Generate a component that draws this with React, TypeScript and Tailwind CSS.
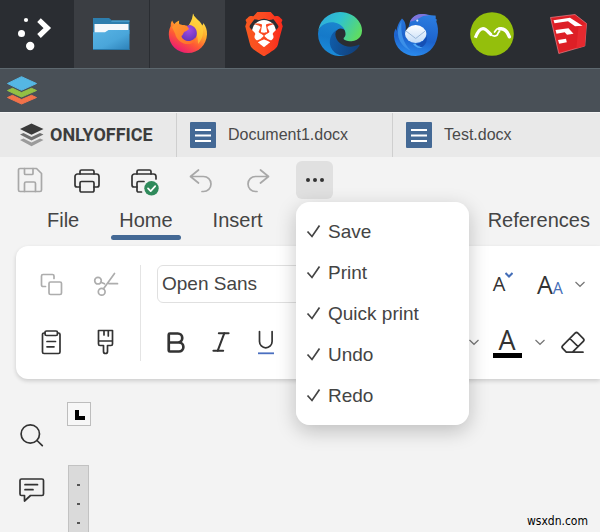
import type { ReactNode } from "react";
import { Bold, Italic } from "lucide-react";
import { SiBrave } from "react-icons/si";

type IconProps = { children: ReactNode; className?: string; size?: number };

function LineIcon({ children, className = "text-[#333]", size = 26 }: IconProps) {
  return (
    <svg
      width={size}
      height={size}
      viewBox={`0 0 ${size} ${size}`}
      fill="none"
      stroke="currentColor"
      strokeWidth="1.7"
      strokeLinecap="round"
      strokeLinejoin="round"
      aria-hidden="true"
      className={`shrink-0 overflow-visible ${className}`}
    >
      {children}
    </svg>
  );
}

function Chevron({ className = "text-[#777]" }: { className?: string }) {
  return (
    <svg width="12" height="12" viewBox="0 0 12 12" fill="none" stroke="currentColor" strokeWidth="1.2" className={className} aria-hidden="true">
      <path d="M1.500 4L6 8.300 10.500 4" />
    </svg>
  );
}

function IconButton({ label, children, className = "w-9" }: { label: string; children: ReactNode; className?: string }) {
  return (
    <button type="button" aria-label={label} className={`flex h-[38px] shrink-0 items-center justify-center ${className}`}>
      {children}
    </button>
  );
}

/* ---------- Desktop panel ---------- */

function TaskIcon({ x, children }: { x: number; children: ReactNode }) {
  return (
    <svg width="45" height="44" viewBox={`${x} 12 45 44`} aria-hidden="true" className="overflow-visible">
      {children}
    </svg>
  );
}

function Launcher() {
  return (
    <TaskIcon x={14}>
      <g fill="#fff">
        <circle cx="26" cy="20" r="2.1" />
        <circle cx="21.5" cy="33.5" r="3.5" />
        <circle cx="30.2" cy="46" r="4.2" />
      </g>
      <path d="M39 20.2l8.3 7.9-8.3 7.9" fill="none" stroke="#fff" strokeWidth="5.2" />
    </TaskIcon>
  );
}

function Files() {
  return (
    <TaskIcon x={88}>
      <defs>
        <linearGradient id="folder" x1="0" y1="0" x2="1" y2="1">
          <stop offset="0" stopColor="#58b3e4" />
          <stop offset=".55" stopColor="#4aa6da" />
          <stop offset="1" stopColor="#2c80b8" />
        </linearGradient>
      </defs>
      <path d="M92 18h16l3 2.5h17.5V34H92z" fill="#2d7eae" />
      <path d="M111 20.5h17.5v1.3H110z" fill="#4ba3d2" />
      <path d="M93.5 24h34v10h-34z" fill="#f4f8fb" />
      <path d="M92 32.3h12l3.5-2.3h21v20H92z" fill="url(#folder)" />
      <path d="M92 49h36.5v1H92z" fill="#2877a8" />
    </TaskIcon>
  );
}

function Firefox() {
  return (
    <TaskIcon x={164}>
      <defs>
        <linearGradient id="ffBody" x1=".8" y1=".1" x2=".3" y2="1">
          <stop offset="0" stopColor="#ffe14a" />
          <stop offset=".35" stopColor="#ffab2c" />
          <stop offset=".65" stopColor="#ff5b33" />
          <stop offset="1" stopColor="#ea1777" />
        </linearGradient>
        <radialGradient id="ffGlobe" cx=".5" cy=".3" r=".8">
          <stop offset="0" stopColor="#a34be2" />
          <stop offset="1" stopColor="#5a32b4" />
        </radialGradient>
        <linearGradient id="ffFox" x1="0" y1="0" x2="1" y2="1">
          <stop offset="0" stopColor="#ff9a2e" />
          <stop offset="1" stopColor="#ff6a2a" />
        </linearGradient>
      </defs>
      <path
        d="M192 13.400C193 17 196 18.700 198.500 21.500C199.800 23 200.700 24.300 201.200 25.500C202 24.800 202.400 24 202.400 23C205 26.500 206.200 30 206 34.500C205.500 45 197.400 53 187.100 53C176.400 53 167.900 45 167.800 34.500C167.800 31 168.600 28.300 169.700 26.100C169.600 23.900 170 22 171.200 20.500C171.700 22 172.400 22.900 173.500 23.900C174.800 22.400 176.200 21.300 178.200 20.500C177.600 22.500 178.300 24.500 179.200 25.700C182.200 25.100 184 25 186.200 27.500C188.800 24 191.900 18.900 192 13.400z"
        fill="url(#ffBody)"
      />
      <path d="M192 13.400C193 17 196 18.700 198.500 21.500C204 28 203 38 197 44C197 36 195.500 29 187.500 25.500C190 22 191.500 18.500 192 13.400z" fill="#ffd43a" opacity=".6" />
      <path d="M184 27.500C186 25 189 24.200 191.500 26C196.500 28.500 196.800 34.500 194.500 38C191.500 42.300 184.500 42.500 181 38.500C178.500 35 179.500 30 184 27.500z" fill="url(#ffGlobe)" />
      <path d="M171 27c2.500-3 6-3.700 9-2.500 2 .8 3.400 1 5.600.9l2.400 3.300c-1 1.700-2.700 2-4.500 3.100-1.500 1-1 3-3 4.200 0 3 5 5.700 8.400 5 3-.5 4.300-2.600 6-3.500-1.200 5-4.500 6.800-8.100 6.600-6.200-.2-11.500-4.500-12.600-10.400z" fill="url(#ffFox)" />
    </TaskIcon>
  );
}

function Brave() {
  return (
    <span className="relative flex items-center justify-center">
      <span className="absolute h-7 w-6 rounded-full bg-white" />
      <svg width="0" height="0" className="absolute" aria-hidden="true">
        <defs>
          <linearGradient id="brave" x1="0" y1="0" x2="1" y2="0">
            <stop offset="0" stopColor="#f8591f" />
            <stop offset=".5" stopColor="#fb4a22" />
            <stop offset="1" stopColor="#fa2a1c" />
          </linearGradient>
        </defs>
      </svg>
      <SiBrave size={44} fill="url(#brave)" className="relative" aria-hidden="true" />
    </span>
  );
}

function Edge() {
  return (
    <svg width="44" height="44" viewBox="0 0 256 256" aria-hidden="true">
      <defs>
        <linearGradient id="edDark" x1="0" y1="0" x2="1" y2=".2">
          <stop offset="0" stopColor="#0f5fae" />
          <stop offset="1" stopColor="#12417c" />
        </linearGradient>
        <linearGradient id="edBlue" x1=".6" y1="0" x2=".4" y2="1">
          <stop offset="0" stopColor="#1b86cf" />
          <stop offset=".5" stopColor="#1579c9" />
          <stop offset="1" stopColor="#1a8ddb" />
        </linearGradient>
        <linearGradient id="edGreen" x1="0" y1=".2" x2="1" y2=".6">
          <stop offset="0" stopColor="#2fa9dd" />
          <stop offset=".45" stopColor="#2fc3cf" />
          <stop offset="1" stopColor="#5fdc62" />
        </linearGradient>
      </defs>
      <path fill="url(#edDark)" d="M235.680 190.480a92.840 92.840 0 0 1-10.540 4.710 101.930 101.930 0 0 1-35.900 6.460c-47.320 0-88.540-32.550-88.540-74.320A31.480 31.480 0 0 1 117.130 100c-42.800 1.800-53.800 46.400-53.800 72.530 0 73.880 68.090 81.370 82.760 81.370 7.910 0 19.840-2.300 27-4.560l1.310-.44a128.340 128.340 0 0 0 66.600-52.800 4 4 0 0 0-5.320-5.620z" />
      <path fill="url(#edBlue)" d="M105.730 241.420A79.200 79.200 0 0 1 83 220.080a80.720 80.720 0 0 1 34.120-120c3.120-1.470 8.450-4.130 15.540-4a32.350 32.350 0 0 1 25.690 13 31.880 31.880 0 0 1 6.360 18.660c0-.21 24.460-79.600-80-79.600-43.900 0-84.700 41.660-84.700 78.210a130.150 130.150 0 0 0 12.110 56 128 128 0 0 0 156.380 67.110 75.550 75.550 0 0 1-62.780-8z" />
      <path fill="url(#edGreen)" d="M152.330 148.860c-.81 1.050-3.300 2.500-3.300 5.660 0 2.610 1.700 5.120 4.720 7.230 14.380 10 41.490 8.680 41.560 8.680A59.560 59.560 0 0 0 225.590 162a61.380 61.380 0 0 0 30.430-52.880c.26-22.410-8-37.310-11.340-43.910C223.460 23.840 177.720.01 127.990.01a128 128 0 0 0-128 126.200c.48-36.540 36.800-66.050 80-66.050 3.500 0 23.460.34 42 10.070 16.340 8.580 24.900 18.940 30.850 29.210 6.180 10.670 7.280 24.150 7.280 29.520s-2.740 13.330-7.810 19.910z" />
    </svg>
  );
}

function Thunderbird() {
  return (
    <TaskIcon x={392}>
      <defs>
        <linearGradient id="tbBody" x1=".6" y1="0" x2=".4" y2="1">
          <stop offset="0" stopColor="#2c7de0" />
          <stop offset=".6" stopColor="#1c62cc" />
          <stop offset="1" stopColor="#2b8cee" />
        </linearGradient>
        <linearGradient id="tbMail" x1="0" y1="0" x2="0" y2="1">
          <stop offset="0" stopColor="#fff" />
          <stop offset="1" stopColor="#c3dcf6" />
        </linearGradient>
      </defs>
      <path
        d="M401 18.500C404.500 21.500 405.500 26 404.500 32L407 29L409 21.500C411.500 16.500 416 14 421 14C426 14 430 16 434.500 15.500C434.800 17 435 18 434.500 18.800C435.800 19 436 20 435.300 21.500C437 26 437.500 31 436.500 36C434.500 48 426 55.800 414.500 56C402.500 56 394 48 393 36.500C392.800 33.500 393.300 31 394.700 28.500L395.500 31C396 26 398 22 401 18.500z"
        fill="url(#tbBody)"
      />
      <path d="M409 21.800C411 17 415.500 14 421 14C424 14 426.500 14.700 428.500 15.500C424 15.300 421 16 418.500 18C415.500 19.500 413 21 409 21.800z" fill="#7f74dc" />
      <path d="M400.500 21c-3.500 5.500-4.500 11-3 16.500 2 6.500 7 11 12 13-7.500-8-10-17-9-29.500z" fill="#3b8fe8" />
      <ellipse cx="414.700" cy="34" rx="10.700" ry="9" fill="url(#tbMail)" />
      <path d="M405 31l9.700 7.500 9.500-7.500" fill="none" stroke="#9ab8da" strokeWidth="1" />
      <path d="M414 44c6-.5 10-3.500 11.500-8 1.500 6-2 11.500-8 11.800 1.500-.6 2-1.500 2-2.300-2 .3-4-.2-5.500-1.500z" fill="#154fb4" />
      <path d="M412 44c2 3 5.500 5 9.500 3.500-3-.3-5.500-1.500-7-4z" fill="#4fa8f5" />
      <circle cx="416.300" cy="20.600" r="1.100" fill="#e6f0fc" />
    </TaskIcon>
  );
}

function WaveApp() {
  return (
    <TaskIcon x={468}>
      <circle cx="491" cy="34" r="21.800" fill="#94bf0c" />
      <path d="M474.300 37.800C476.500 32 479 28.600 482 28.600C485.500 28.600 488 33.500 490.500 35" fill="none" stroke="#fff" strokeWidth="3.200" />
      <path d="M489 33.200C491 36 493.500 36.800 495.500 35.600C497.500 34.500 496.500 32 498.500 31.600M493.500 32C495 29.500 497 28 499.500 28.200" fill="none" stroke="#fff" strokeWidth="1.700" strokeLinecap="round" />
      <path d="M498.500 29C503.500 27.800 506.500 32 508.400 36.800" fill="none" stroke="#fff" strokeWidth="3.400" strokeLinecap="round" />
    </TaskIcon>
  );
}

function SketchApp() {
  return (
    <TaskIcon x={544}>
      <path d="M549.500 17.500L574 14.500l11.500 9-1.700 22.500-26 7.500z" fill="#dd1f26" stroke="#e9828a" strokeWidth=".7" />
      <path d="M577.500 26.500l8-3-1.700 22.500-8.500 2.500z" fill="#e6292f" />
      <path d="M552.500 20.200l16.500-2.500 12.500 8-7.500.6-7-5-13.500 2z" fill="#fff" />
      <path d="M554.500 30l13-1.800 5 5.500-6.500 1.100-2.300-2.500-8.200 1.400z" fill="#fff" />
      <path d="M557 40l8-1.300.8 3.500-7.600 1.500z" fill="#fff" />
    </TaskIcon>
  );
}

const tasks = [
  { name: "Files", icon: <Files />, open: true },
  { name: "Firefox", icon: <Firefox />, open: true },
  { name: "Brave", icon: <Brave />, open: false },
  { name: "Edge", icon: <Edge />, open: false },
  { name: "Thunderbird", icon: <Thunderbird />, open: false },
  { name: "Wave", icon: <WaveApp />, open: false },
  { name: "SketchUp", icon: <SketchApp />, open: false },
];

function Taskbar() {
  return (
    <nav aria-label="Taskbar" className="flex h-[68px] gap-px overflow-hidden bg-[#2a2d32]">
      <button type="button" aria-label="Application launcher" className="flex w-[73px] shrink-0 items-center justify-center">
        <Launcher />
      </button>
      {tasks.map((t) => (
        <button
          key={t.name}
          type="button"
          aria-label={t.name}
          className={`flex w-[75px] shrink-0 items-center justify-center ${t.open ? "bg-[#3b3e43]" : ""}`}
        >
          {t.icon}
        </button>
      ))}
    </nav>
  );
}

/* ---------- Window title and document tabs ---------- */

function TitleBar() {
  return (
    <header className="flex h-11 items-center border-t border-[#5d686f] bg-[#495057] pl-[6px]">
      <svg width="32" height="30" viewBox="6 76 32 30" aria-hidden="true">
        <path d="M7.500 97.500l14 6.500 15-6.500-5-2.200-10 4.300-9-4.300z" fill="#f2724a" stroke="#f2724a" strokeLinejoin="round" />
        <path d="M7.500 90.500l14 6.500 15-6.500-5-2.200-10 4.300-9-4.300z" fill="#93c044" stroke="#93c044" strokeLinejoin="round" />
        <path d="M7.500 83.500L21.500 76.700l15 6.800-15 6.800z" fill="#55b7e4" stroke="#55b7e4" strokeLinejoin="round" />
      </svg>
    </header>
  );
}

function DocumentTab({ title, className = "" }: { title: string; className?: string }) {
  return (
    <button type="button" role="tab" className={`flex h-full items-center border-l border-[#cfcfcf] pl-[13px] text-left text-base text-[#4a4a4a] ${className}`}>
      <svg width="26" height="26" viewBox="0 0 26 26" aria-hidden="true" className="mr-3 shrink-0">
        <rect width="26" height="26" rx="1" fill="#446995" />
        <path d="M5 8h16M5 13.500h16M5 19h16" stroke="#fff" strokeWidth="2" />
      </svg>
      {title}
    </button>
  );
}

function DocumentTabs() {
  return (
    <div role="tablist" aria-label="Documents" className="flex h-[45px] items-center border-t border-[#f5f5f5] bg-[#e9e9e9]">
      <button type="button" className="flex h-full w-44 shrink-0 items-center gap-[6px] pl-5 font-[Roboto,sans-serif] text-lg font-bold text-[#3d3d3d]">
        <svg width="24" height="24" viewBox="0 0 24 24" aria-hidden="true" className="shrink-0">
          <path d="M0 17l11.500 6.300L23.500 17l-3.500-1.600-8.500 4.200L3.500 15.400z" fill="#9b9b9b" />
          <path d="M0 11.500l11.500 6 12-6-3.500-1.600-8.500 4-8-4z" fill="#6f6f6f" />
          <path d="M0 6L11.500.5 23.500 6l-12 5.700z" fill="#3a3a3a" />
        </svg>
        ONLYOFFICE
      </button>
      <DocumentTab title="Document1.docx" className="w-[216px] shrink-0" />
      <DocumentTab title="Test.docx" className="flex-1" />
    </div>
  );
}

/* ---------- Quick access ---------- */

const quickActions = ["Save", "Print", "Quick print", "Undo", "Redo"];

function PrinterShape({ clipped = false }: { clipped?: boolean }) {
  return (
    <>
      <path d="M6 7V4.500a1.500 1.500 0 0 1 1.500-1.500h11A1.500 1.500 0 0 1 20 4.500V7" />
      <path d={clipped ? "M6 20H3a2 2 0 0 1-2-2V9.500a2.500 2.500 0 0 1 2.500-2.500h19A2.500 2.500 0 0 1 25 9.500V12" : "M6 20H3a2 2 0 0 1-2-2V9.500a2.500 2.500 0 0 1 2.500-2.500h19A2.500 2.500 0 0 1 25 9.500V18a2 2 0 0 1-2 2h-3"} />
      <path d={clipped ? "M10.500 25H7.500A1.500 1.500 0 0 1 6 23.500V16a1.500 1.500 0 0 1 1.500-1.500H13" : "M7.500 14.500h11A1.500 1.500 0 0 1 20 16v7.500a1.500 1.500 0 0 1-1.500 1.500h-11A1.500 1.500 0 0 1 6 23.500V16a1.500 1.500 0 0 1 1.500-1.500z"} />
    </>
  );
}

function QuickMenu() {
  return (
    <fieldset
      aria-label="Customize quick access"
      className="absolute left-0 top-[41px] z-10 w-[173px] rounded-[14px] bg-white py-[9px] shadow-[0_6px_20px_rgba(0,0,0,0.22)]"
    >
      {quickActions.map((action) => (
        <label key={action} className="flex h-[41px] items-center gap-[6px] pl-[10px] text-[19px] leading-6 text-[#444]">
          <input type="checkbox" defaultChecked className="peer sr-only" />
          <svg width="16" height="16" viewBox="0 0 16 16" fill="none" stroke="#444" strokeWidth="1.700" aria-hidden="true" className="shrink-0 opacity-0 peer-checked:opacity-100">
            <path d="M1.500 7.500L6 12.500 13.500 1.500" />
          </svg>
          {action}
        </label>
      ))}
    </fieldset>
  );
}

function QuickAccess() {
  return (
    <div className="flex gap-5 py-1 pl-[11px]">
      <IconButton label="Save" className="w-[37px]">
        <LineIcon className="text-[#a8a8a8]">
          <path d="M3 1.500h16.500l5 5V23a1.500 1.500 0 0 1-1.500 1.500H3A1.500 1.500 0 0 1 1.500 23V3A1.500 1.500 0 0 1 3 1.500z" />
          <path d="M7.500 1.500v5a1 1 0 0 0 1 1h6.500a1 1 0 0 0 1-1v-5M7.500 24.500V16.500A1.500 1.500 0 0 1 9 15h8a1.500 1.500 0 0 1 1.500 1.500v8" />
        </LineIcon>
      </IconButton>
      <IconButton label="Print" className="w-[37px]">
        <LineIcon>
          <PrinterShape />
        </LineIcon>
      </IconButton>
      <IconButton label="Quick print" className="w-[37px]">
        <LineIcon>
          <PrinterShape clipped />
          <circle cx="20.500" cy="21.300" r="7.200" fill="#2f8a5b" stroke="none" />
          <path d="M17 21.300l2.700 2.800 4.500-5" stroke="#fff" />
        </LineIcon>
      </IconButton>
      <IconButton label="Undo" className="w-[37px]">
        <LineIcon className="text-[#a8a8a8]">
          <path d="M10.500 3L2.500 9.500l8 6.500M2.500 9.500H15.500a7.500 7.500 0 0 1 0 15H14" />
        </LineIcon>
      </IconButton>
      <IconButton label="Redo" className="w-[37px]">
        <LineIcon className="text-[#a8a8a8]">
          <path d="M15.500 3l8 6.500-8 6.500M23.500 9.500H10.500a7.500 7.500 0 0 0 0 15H12" />
        </LineIcon>
      </IconButton>
      <div className="relative">
        <IconButton label="Customize quick access toolbar" className="w-[37px] rounded-md bg-[#e0e0e0]">
          <svg width="20" height="6" viewBox="0 0 20 6" fill="#333" aria-hidden="true">
            <circle cx="3" cy="3" r="2" />
            <circle cx="10" cy="3" r="2" />
            <circle cx="17" cy="3" r="2" />
          </svg>
        </IconButton>
        <QuickMenu />
      </div>
    </div>
  );
}

/* ---------- Ribbon ---------- */

function RibbonTab({ title, active = false, className = "" }: { title: string; active?: boolean; className?: string }) {
  return (
    <button type="button" role="tab" aria-selected={active} className={`shrink-0 pt-[3px] text-xl leading-7 text-[#444] ${className}`}>
      <span className="block px-2">{title}</span>
      <span className={`mt-px block h-[5px] rounded-full ${active ? "bg-[#446995]" : ""}`} />
    </button>
  );
}

function RibbonTabs() {
  return (
    <div role="tablist" aria-label="Ribbon" className="flex gap-6 overflow-hidden pb-[6px] pl-[39px]">
      <RibbonTab title="File" />
      <RibbonTab title="Home" active />
      <RibbonTab title="Insert" />
      <RibbonTab title="References" className="ml-[185px]" />
    </div>
  );
}

function Ribbon() {
  return (
    <section aria-label="Home" className="ml-4 flex overflow-hidden rounded-l-xl bg-white pb-[18px] pl-[15px] pt-[19px] shadow-[0_2px_4px_rgba(0,0,0,0.16)]">
      <div className="grid shrink-0 grid-cols-2 gap-x-[14px] gap-y-5">
        <IconButton label="Copy" className="w-10">
          <LineIcon className="text-[#adadad]">
            <rect x="11" y="11" width="12.500" height="12.500" rx="1.500" />
            <path d="M7.500 15.500H5A1.500 1.500 0 0 1 3.500 14V5A1.500 1.500 0 0 1 5 3.500h9.500A1.500 1.500 0 0 1 16 5v2.500" />
          </LineIcon>
        </IconButton>
        <IconButton label="Cut" className="w-10">
          <LineIcon className="text-[#adadad]">
            <circle cx="6" cy="9.700" r="3.300" />
            <circle cx="9.700" cy="20.700" r="3.400" />
            <path d="M11.500 17.700L22.500 2.500M9 11.200l3.500 1.600M17 12.700h8.500" />
          </LineIcon>
        </IconButton>
        <IconButton label="Paste" className="w-10">
          <LineIcon>
            <path d="M7 4H6a1.500 1.500 0 0 0-1.500 1.500V23A1.500 1.500 0 0 0 6 24.500h14.500A1.500 1.500 0 0 0 22 23V5.500A1.500 1.500 0 0 0 20.500 4h-1" />
            <rect x="7" y="2" width="12.500" height="4.500" rx="1.500" />
            <path d="M9 12.500h8.500M9 17.800h7" />
          </LineIcon>
        </IconButton>
        <IconButton label="Copy style" className="w-10">
          <LineIcon>
            <path d="M6.500 1.500h14V15a1.500 1.500 0 0 1-1.500 1.500h-3.500V22.500a2 2 0 0 1-4 0V16.500H8A1.500 1.500 0 0 1 6.500 15zM6.500 12h14M12 1.500V6M16.300 1.500V7" />
          </LineIcon>
        </IconButton>
      </div>

      <div className="ml-[15px] mr-4 w-px shrink-0 bg-[#e4e4e4]" />

      <div className="flex min-w-0 flex-1 flex-col gap-5">
        <div className="flex items-center">
          <input
            type="text"
            aria-label="Font"
            defaultValue="Open Sans"
            className="h-[38px] w-[304px] shrink-0 rounded-md border border-[#e0e0e0] px-1 text-[19px] text-[#444] outline-none"
          />
          <IconButton label="Decrease font size" className="ml-6 w-9">
            <span className="font-['Open_Sans',sans-serif] text-xl leading-6 text-[#333]">A</span>
            <span className="flex h-6 items-start">
              <svg width="8" height="8" viewBox="0 0 8 8" fill="none" stroke="#446eb8" strokeWidth="2" aria-hidden="true">
                <path d="M.5 1L4 4.500l3.500-3.500" />
              </svg>
            </span>
          </IconButton>
          <IconButton label="Change case" className="ml-4 gap-[11px]">
            <span className="flex items-baseline font-['Open_Sans',sans-serif] text-[#333]">
              <span className="text-[25px] leading-8">A</span>
              <span className="text-base leading-6 text-[#446eb8]">A</span>
            </span>
            <Chevron />
          </IconButton>
        </div>
        <div className="flex items-center gap-[9px]">
          <IconButton label="Bold" className="w-[37px]">
            <Bold size={27} strokeWidth={2.400} className="text-[#333]" aria-hidden="true" />
          </IconButton>
          <IconButton label="Italic">
            <Italic size={26} strokeWidth={1.900} className="text-[#333]" aria-hidden="true" />
          </IconButton>
          <IconButton label="Underline">
            <LineIcon>
              <path d="M6.500 2.500v10a6.300 6.300 0 0 0 12.600 0v-10" />
              <path d="M5 24.300h16" stroke="#4a6fc0" strokeLinecap="butt" strokeWidth="1.800" />
            </LineIcon>
          </IconButton>
          <IconButton label="Highlight color" className="w-[187px]">
            <span className="flex w-full justify-end">
              <Chevron />
            </span>
          </IconButton>
          <IconButton label="Font color">
            <span className="flex w-[29px] flex-col items-center border-b-[5px] border-black font-['Open_Sans',sans-serif] text-[27px] leading-[26px] text-[#333]">A</span>
          </IconButton>
          <IconButton label="Font color options" className="w-3">
            <Chevron />
          </IconButton>
          <IconButton label="Clear style">
            <LineIcon>
              <path d="M6.300 23.200L2.700 19.400a2 2 0 0 1 0-2.800L15.100 4.200a2 2 0 0 1 2.800 0l5.400 5.400a2 2 0 0 1 0 2.800L12.500 23.200zM12.500 23.200h10.500M9.800 9.500l8.300 8.200" />
            </LineIcon>
          </IconButton>
        </div>
      </div>
    </section>
  );
}

/* ---------- Workspace ---------- */

function Workspace() {
  return (
    <main className="flex flex-1">
      <nav aria-label="Side panel" className="flex w-16 shrink-0 flex-col items-center gap-[17px] pt-[37px]">
        <IconButton label="Find">
          <LineIcon>
            <circle cx="11.300" cy="12" r="9.200" />
            <path d="M18 18.500l5.300 5.200" />
          </LineIcon>
        </IconButton>
        <IconButton label="Comments">
          <LineIcon>
            <path d="M2.500 2h20.500a1.500 1.500 0 0 1 1.500 1.500V17a1.500 1.500 0 0 1-1.500 1.500H11.500l-6 5.500v-5.500h-3A1.500 1.500 0 0 1 1 17V3.500A1.500 1.500 0 0 1 2.500 2zM6 7.700h12.500M6 12.700h8" />
          </LineIcon>
        </IconButton>
      </nav>
      <div className="flex flex-col pl-[3px] pt-[23px]">
        <button type="button" aria-label="Tab stop" className="flex h-6 w-6 items-center justify-center border border-[#bdbdbd] bg-[#f7f7f7] pl-px pt-[2px]">
          <span className="h-[10px] w-[10px] border-b-[4px] border-l-[4px] border-black" />
        </button>
        <div className="ml-px mt-[39px] flex w-[21px] flex-1 flex-col items-center gap-[17px] border border-b-0 border-[#c2c2c2] bg-[#dadada] pt-[18px]">
          {[1, 2, 3].map((mark) => (
            <span key={mark} className="h-[2px] w-[3px] shrink-0 bg-[#555]" />
          ))}
        </div>
      </div>
      <p className="ml-auto self-end pb-[3px] pr-3 font-['DejaVu_Sans_Condensed','DejaVu_Sans',sans-serif] text-xs leading-4 text-black">wsxdn.com</p>
    </main>
  );
}

export default function App() {
  return (
    <div className="flex min-h-screen w-full flex-col overflow-hidden bg-[#f3f3f3] font-['Liberation_Sans',Arial,sans-serif]">
      <Taskbar />
      <TitleBar />
      <DocumentTabs />
      <QuickAccess />
      <RibbonTabs />
      <Ribbon />
      <Workspace />
    </div>
  );
}
